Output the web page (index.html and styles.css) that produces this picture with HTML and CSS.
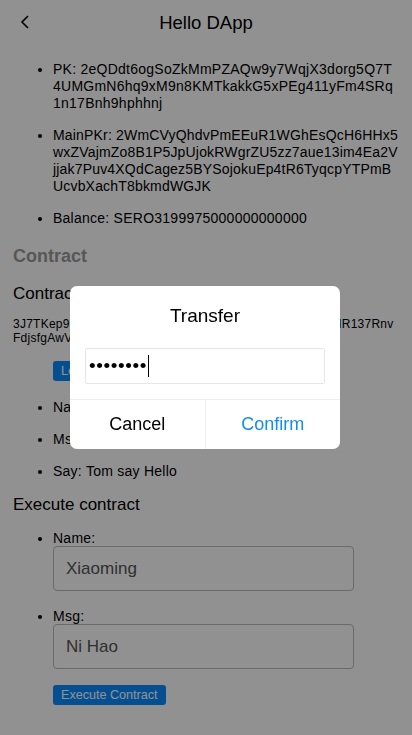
FILE: index.html
```html
<!DOCTYPE html>
<html>
<head>
<meta charset="utf-8">
<link rel="stylesheet" href="styles.css">
</head>
<body>
<div class="page">
  <header class="nav">
    <span class="back">
      <svg width="12" height="16" viewBox="0 0 12 16"><path d="M9 2 L3 8 L9 14" fill="none" stroke="#000" stroke-width="1.6"/></svg>
    </span>
    <h1 class="title">Hello DApp</h1>
  </header>
  <main class="content">
    <ul class="info">
      <li>PK: 2eQDdt6ogSoZkMmPZAQw9y7WqjX3dorg5Q7T4UMGmN6hq9xM9n8KMTkakkG5xPEg411yFm4SRq1n17Bnh9hphhnj</li>
      <li class="tight">MainPKr: 2WmCVyQhdvPmEEuR1WGhEsQcH6HHx5wxZVajmZo8B1P5JpUjokRWgrZU5zz7aue13im4Ea2Vjjak7Puv4XQdCagez5BYSojokuEp4tR6TyqcpYTPmBUcvbXachT8bkmdWGJK</li>
      <li>Balance: SERO3199975000000000000</li>
    </ul>
    <h2 class="section">Contract</h2>
    <h3 class="sub">Contract Address</h3>
    <p class="addr">3J7TKep9mXQ2cHv8LqWzR4nT6bYdE5sKfPuA1oGhN9jVIR137RnvFdjsfgAwVq4Lm8Tz</p>
    <ul class="info list2">
      <li class="btnrow"><button class="btn">Load Contract</button></li>
      <li>Name: Tom</li>
      <li>Msg: Hello</li>
      <li>Say: Tom say Hello</li>
    </ul>
    <h3 class="sub exec">Execute contract</h3>
    <ul class="info form">
      <li>Name:<div class="field">Xiaoming</div></li>
      <li>Msg:<div class="field">Ni Hao</div></li>
    </ul>
    <div class="execrow"><button class="btn">Execute Contract</button></div>
  </main>
</div>
<div class="mask">
  <div class="modal">
    <div class="mtitle">Transfer</div>
    <div class="mbody">
      <div class="pwd"><span class="dots">••••••••</span><span class="caret"></span></div>
    </div>
    <div class="mfoot">
      <div class="mbtn">Cancel</div>
      <div class="mbtn primary">Confirm</div>
    </div>
  </div>
</div>
</body>
</html>
```

FILE: styles.css
```css
* { box-sizing: border-box; }
html, body { margin: 0; padding: 0; }
body {
  font-family: "Liberation Sans", Arial, sans-serif;
  color: #000;
  background: #fff;
  width: 412px;
  height: 735px;
  overflow: hidden;
}
.nav {
  height: 45px;
  display: flex;
  align-items: center;
  justify-content: center;
  position: relative;
}
.back {
  position: absolute;
  left: 19px;
  top: 14px;
  display: flex;
}
.title {
  margin: 0;
  font-size: 18.5px;
  font-weight: normal;
}
.content {
  padding: 0 13px;
}
.info {
  margin: 16px 0 0;
  padding-left: 40px;
  list-style: disc;
}
.info li {
  font-size: 14px;
  line-height: 17px;
  letter-spacing: 0.25px;
  word-break: break-all;
  margin-bottom: 15px;
}
.info li.tight { letter-spacing: 0.18px; }
.section {
  margin: 18px 0 0;
  font-size: 18px;
  font-weight: bold;
  color: #999;
  line-height: 22px;
}
.sub {
  margin: 17px 0 0;
  font-size: 17px;
  font-weight: normal;
  line-height: 20px;
}
.addr {
  margin: 13px 0 0;
  font-size: 12px;
  line-height: 14px;
  letter-spacing: 0.25px;
  word-break: break-all;
}
.list2 li { margin-bottom: 15px; }
.list2 .btnrow { list-style: none; margin-bottom: 18px; }
.btn {
  font-family: "Liberation Sans", Arial, sans-serif;
  background: #0a8cff;
  color: #fff;
  border: none;
  border-radius: 3px;
  font-size: 12.6px;
  height: 20px;
  padding: 0 8px;
  line-height: 20px;
}
.exec { margin-top: 0; }
.form { margin-top: 15px; }
.form li { margin-bottom: 17px; }
.field {
  margin-top: -1px;
  width: 301px;
  height: 45px;
  border: 1px solid #bbb;
  border-radius: 4px;
  background: #fff;
  color: #555;
  font-size: 17px;
  letter-spacing: 0;
  display: flex;
  align-items: center;
  padding-left: 12px;
}
.execrow {
  padding-left: 40px;
  margin-top: -1px;
}
.mask {
  position: fixed;
  inset: 0;
  background: rgba(0,0,0,0.43);
  display: flex;
  align-items: center;
  justify-content: center;
}
.modal {
  width: 270px;
  background: #fff;
  border-radius: 7px;
  overflow: hidden;
  margin-left: -2px;
}
.mtitle {
  text-align: center;
  font-size: 19px;
  line-height: 22px;
  padding-top: 19px;
  color: #000;
}
.mbody {
  margin-top: 21px;
  padding: 0 15px 15px;
}
.pwd {
  height: 36px;
  border: 1px solid #e6e6e6;
  border-radius: 2px;
  display: flex;
  align-items: center;
  padding-left: 3px;
}
.dots {
  font-size: 19px;
  letter-spacing: 0.6px;
  color: #000;
}
.caret {
  display: inline-block;
  width: 1px;
  height: 22px;
  background: #000;
  margin-left: 1px;
}
.mfoot {
  display: flex;
  border-top: 1px solid #eee;
  height: 50px;
}
.mbtn {
  flex: 1;
  display: flex;
  align-items: center;
  justify-content: center;
  font-size: 18px;
  color: #000;
}
.mbtn + .mbtn { border-left: 1px solid #eee; }
.primary { color: #108ee9; }
```
